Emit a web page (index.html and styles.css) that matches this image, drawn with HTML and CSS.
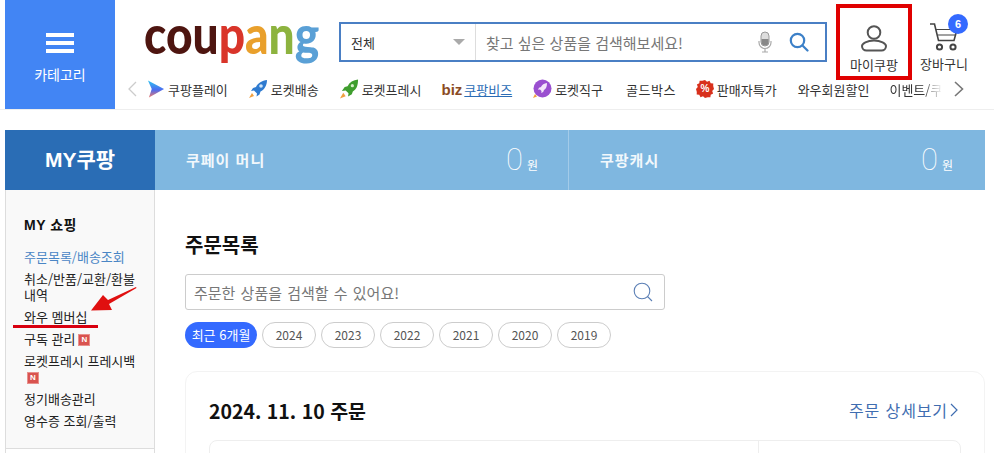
FILE: index.html
```html
<!DOCTYPE html>
<html lang="ko">

<head>
    <meta content="text/html; charset=utf-8" http-equiv="Content-Type">
    <title>쿠팡 - 주문목록</title>
    <link rel="stylesheet" href="styles.css">
</head>

<body>
    <header class="header">
        <a class="categoryBtn">
            <span class="burger"><i></i><i></i><i></i></span>
            <span class="categoryLabel">카테고리</span>
        </a>
        <div class="headerMain">
            <div class="headerTop">
                <div class="logo"><span class="logoText"><span class="c1">cou</span><span class="c2">p</span><span class="c3">a</span><span class="c4">n</span><span class="c5">g</span></span></div>
                <div class="searchBox">
                    <div class="searchCat">전체<span class="caret"></span></div>
                    <div class="searchInput">찾고 싶은 상품을 검색해보세요!</div>
                    <svg class="micIcon" width="14" height="22" viewBox="0 0 14 22">
                        <rect x="3" y="1" width="8" height="14" rx="4" fill="#ddd" stroke="#999"/>
                        <path d="M3.5 8h7v3a3.5 3.5 0 0 1-7 0z" fill="#888"/>
                        <path d="M1 10v1.5a6 6 0 0 0 12 0V10M7 17.5V21M4 21h6" fill="none" stroke="#aaa" stroke-width="1.2"/>
                    </svg>
                    <svg class="glassIcon" width="20" height="20" viewBox="0 0 20 20">
                        <circle cx="8.5" cy="8.5" r="6.7" fill="none" stroke="#3c80c8" stroke-width="2.2"/>
                        <path d="M13.5 13.5l5 5" stroke="#3c80c8" stroke-width="2.2" stroke-linecap="round"/>
                    </svg>
                </div>
                <div class="userLinks">
                    <a class="myLink">
                        <svg width="28" height="28" viewBox="0 0 28 28">
                            <circle cx="14" cy="8.5" r="6.3" fill="none" stroke="#555" stroke-width="2"/>
                            <path d="M6.5 26.5h15a4.5 4.5 0 0 0 4.5-4.5c0-2.500-5-5.500-12-5.500S2 19.500 2 22a4.500 4.500 0 0 0 4.500 4.500z" fill="none" stroke="#555" stroke-width="2"/>
                        </svg>
                        <span>마이쿠팡</span>
                    </a>
                    <a class="cartLink">
                        <svg width="30" height="30" viewBox="0 0 30 30">
                            <path d="M1 2h4.500l4 16.500h15.500l3-11" fill="none" stroke="#444" stroke-width="1.600"/>
                            <path d="M7 7.500h21M8.500 13h18" fill="none" stroke="#444" stroke-width="1.200"/>
                            <circle cx="10.500" cy="25" r="2.600" fill="none" stroke="#444" stroke-width="2"/>
                            <circle cx="24" cy="25" r="2.600" fill="none" stroke="#444" stroke-width="2"/>
                        </svg>
                        <b class="cartBadge">6</b>
                        <span>장바구니</span>
                    </a>
                </div>
            </div>
            <nav class="quickNav">
                <svg class="navArrow" width="9" height="16" viewBox="0 0 9 16"><path d="M8 1L1 8l7 7" fill="none" stroke="#ccc" stroke-width="1.300"/></svg>
                <a class="navItem first">
                    <svg width="18" height="20" viewBox="0 0 19 20"><defs><linearGradient id="play" x1="0" y1="0" x2="0" y2="1"><stop offset="0" stop-color="#2fc4f0"/><stop offset=".55" stop-color="#4c6cf0"/><stop offset="1" stop-color="#f07a6a"/></linearGradient></defs><path d="M1 1l17 9L2 19l3-9z" fill="url(#play)"/></svg>
                    쿠팡플레이
                </a>
                <a class="navItem">
                    <svg width="20" height="20" viewBox="0 0 20 20"><path d="M19 1c-5 .5-9 3-11 7l-3 1-2 3 3-.5 3 3-.5 3 3-2 1-3c4-2 6.500-6 6.500-11.500z" fill="#2f7bd0"/><circle cx="13" cy="7" r="1.800" fill="#cfe6fa"/><path d="M4 14l-3 5 5-2z" fill="#f0a040"/></svg>
                    로켓배송
                </a>
                <a class="navItem">
                    <svg width="20" height="20" viewBox="0 0 21 20"><path d="M20 0c-5 .5-9 3-11 7l-3 1-3 4 4-.5 3 3-.5 3.500 4-2.500 1-3c4-2 5.500-6.500 5.500-12.500z" fill="#3f9e2e"/><circle cx="14" cy="6.500" r="1.700" fill="#d5f0c8"/><path d="M4.500 14L1 20l6-2.500z" fill="#f0a040"/></svg>
                    로켓프레시
                </a>
                <a class="navItem biz"><b>biz</b><u>쿠팡비즈</u></a>
                <a class="navItem">
                    <svg width="20" height="20" viewBox="0 0 20 20"><circle cx="10.500" cy="9.500" r="9" fill="#9a4fd0"/><path d="M15 4c-3 .3-5 2-6 4l-2 .8-1 2 2-.3 1.500 1.500-.3 2 2-1 .8-2c2-1 3-3.500 3-7z" fill="#f3e6fb"/><path d="M3 15l-2 4 4-1.500z" fill="#f0a040"/></svg>
                    로켓직구
                </a>
                <a class="navItem gold">골드박스</a>
                <a class="navItem">
                    <span class="saleBadge">
                        <svg width="18" height="18" viewBox="0 0 18 18"><path d="M9 0l2 1.800 2.500-1 1.200 2.400 2.600.2-.1 2.700L18 9l-1.800 2 .9 2.500-2.400 1.200-.3 2.600-2.700-.1L9 18l-2-1.800-2.500 1-1.200-2.400-2.600-.2.1-2.700L0 9l1.800-2-.9-2.500 2.400-1.200.3-2.600 2.700.1z" fill="#d8301c"/></svg>
                        <span>%</span>
                    </span>
                    판매자특가
                </a>
                <a class="navItem wowItem">와우회원할인</a>
                <a class="navItem fade"><span>이벤트/쿠</span></a>
                <svg class="navArrow next" width="10" height="16" viewBox="0 0 10 16"><path d="M1 1l7.500 7L1 15" fill="none" stroke="#777" stroke-width="1.600"/></svg>
            </nav>
        </div>
    </header>

    <div class="myBar">
        <div class="myTitle">MY쿠팡</div>
        <div class="payCell first">
            <span class="payName">쿠페이 머니</span>
            <span class="payValue"><em>0</em>원</span>
        </div>
        <div class="payCell">
            <span class="payName">쿠팡캐시</span>
            <span class="payValue"><em>0</em>원</span>
        </div>
    </div>

    <div class="content">
        <aside class="sideMenu">
            <h3 class="sideTitle">MY 쇼핑</h3>
            <ul class="sideList">
                <li class="active">주문목록/배송조회</li>
                <li>취소/반품/교환/환불내역</li>
                <li class="wow">와우 멤버십</li>
                <li>구독 관리<span class="newMark">N</span></li>
                <li>로켓프레시 프레시백 <span class="newMark">N</span></li>
                <li>정기배송관리</li>
                <li>영수증 조회/출력</li>
            </ul>
            <svg class="redArrow" width="48" height="26" viewBox="0 0 48 26"><path d="M46 1L18 14l-5-5L1 24.500 22 24l-3-6L46.500 2z" fill="#e01010"/></svg>
            <div class="sideNext"></div>
        </aside>

        <main class="orders">
            <h2 class="ordersTitle">주문목록</h2>
            <div class="orderSearch">
                <span>주문한 상품을 검색할 수 있어요!</span>
                <svg width="20" height="20" viewBox="0 0 20 20"><circle cx="9" cy="9" r="7.800" fill="none" stroke="#5b7fb5" stroke-width="1.100"/><path d="M14.500 14.500l4.500 4.500" stroke="#5b7fb5" stroke-width="1.100"/></svg>
            </div>
            <div class="yearTabs">
                <a class="pill on">최근 6개월</a>
                <a class="pill">2024</a>
                <a class="pill">2023</a>
                <a class="pill">2022</a>
                <a class="pill">2021</a>
                <a class="pill">2020</a>
                <a class="pill">2019</a>
            </div>
            <section class="orderCard">
                <div class="orderHead">
                    <strong>2024. 11. 10 주문</strong>
                    <a class="detailLink">주문 상세보기
                        <svg width="8" height="14" viewBox="0 0 8 14"><path d="M1 1l6 6-6 6" fill="none" stroke="#3f6db0" stroke-width="1.200"/></svg>
                    </a>
                </div>
                <div class="orderBody">
                    <div class="orderItems"></div>
                    <div class="orderActions"></div>
                </div>
            </section>
        </main>
    </div>
</body>

</html>
```

FILE: styles.css
```css
html, body {
    height: 453px;
    overflow: hidden;
}

body {
    margin: 0;
    background: #fff;
    color: #111;
    font-family: "Noto Sans CJK KR", "Liberation Sans", sans-serif;
    font-size: 13px;
}

a {
    color: inherit;
    text-decoration: none;
}

/* header */
.header {
    display: flex;
    height: 109px;
    padding-left: 5px;
    border-bottom: 1px solid #eee;
}

.categoryBtn {
    display: flex;
    flex-direction: column;
    align-items: center;
    width: 110px;
    height: 109px;
    background: #4285f4;
    color: #fff;
}

.burger {
    display: block;
    width: 28px;
    margin-top: 33px;
}

.burger i {
    display: block;
    height: 4px;
    margin-bottom: 4px;
    background: #fff;
}

.categoryLabel {
    margin-top: 8px;
    font-size: 14px;
    line-height: 18px;
}

.headerMain {
    flex: 1;
    min-width: 0;
}

.headerTop {
    display: flex;
    height: 75px;
}

.logo {
    width: 195px;
    margin-left: 29px;
    font-family: "Lato", sans-serif;
    font-size: 53px;
    font-weight: 900;
    line-height: 68px;
}

.logoText {
    display: inline-block;
    transform: scaleX(0.87);
    transform-origin: left center;
    white-space: nowrap;
}

.c1 { color: #4e1510; }
.c2 { color: #d9352a; }
.c3 { color: #e9a02c; }
.c4 { color: #8db33f; }
.c5 { color: #5aa0d6; }

.searchBox {
    display: flex;
    align-items: center;
    width: 488px;
    height: 40px;
    margin-top: 22px;
    border: 2px solid #4a7fc4;
    box-sizing: border-box;
}

.searchCat {
    display: flex;
    align-items: center;
    justify-content: space-between;
    width: 135px;
    height: 100%;
    padding: 0 10px;
    box-sizing: border-box;
    border-right: 1px solid #ddd;
    color: #333;
    font-size: 13px;
}

.caret {
    border-top: 6px solid #aaa;
    border-left: 6px solid transparent;
    border-right: 6px solid transparent;
}

.searchInput {
    flex: 1;
    padding-left: 10px;
    color: #777;
    font-size: 15px;
}

.micIcon {
    margin-right: 17px;
}

.glassIcon {
    margin-right: 16px;
}

.userLinks {
    display: flex;
    margin-left: 9px;
}

.myLink {
    display: flex;
    flex-direction: column;
    align-items: center;
    width: 76px;
    height: 76px;
    margin-top: 4px;
    padding-top: 16px;
    box-sizing: border-box;
    border: 4px solid #e00000;
    color: #333;
    font-size: 13px;
    white-space: nowrap;
}

.myLink span {
    margin-top: 3px;
}

.cartLink {
    position: relative;
    display: flex;
    flex-direction: column;
    align-items: center;
    width: 50px;
    margin-left: 7px;
    padding-top: 22px;
    color: #333;
    font-size: 13px;
}

.cartLink span {
    margin-top: 2px;
    white-space: nowrap;
}

.cartBadge {
    position: absolute;
    top: 14px;
    left: 29px;
    width: 20px;
    height: 20px;
    border-radius: 50%;
    background: #346aff;
    color: #fff;
    font-family: "Liberation Sans", sans-serif;
    font-size: 11px;
    line-height: 20px;
    text-align: center;
}

.quickNav {
    display: flex;
    align-items: center;
    height: 28px;
    padding-left: 13px;
    color: #333;
    white-space: nowrap;
}

.navItem {
    display: flex;
    align-items: center;
    gap: 3px;
    margin-left: 20px;
    font-size: 13px;
}

.navItem.first {
    margin-left: 10px;
}

.navItem.gold {
    margin-left: 23px;
    letter-spacing: 0.5px;
}

.navItem.wowItem {
    margin-left: 21px;
}

.biz {
    gap: 2px;
}

.biz b {
    color: #8a4b24;
    font-family: "Liberation Sans", sans-serif;
    font-size: 15px;
}

.biz u {
    color: #2b6cb5;
}

.saleBadge {
    position: relative;
    display: block;
    width: 18px;
    height: 18px;
    color: #fff;
    font-family: "Liberation Sans", sans-serif;
    font-size: 10px;
    font-weight: 700;
    line-height: 18px;
    text-align: center;
}

.saleBadge svg {
    position: absolute;
    left: 0;
    top: 0;
}

.saleBadge span {
    position: relative;
}

.fade {
    width: 52px;
    overflow: hidden;
}

.fade span {
    -webkit-mask-image: linear-gradient(to right, #000 65%, transparent 100%);
    mask-image: linear-gradient(to right, #000 65%, transparent 100%);
}

.navArrow.next {
    margin-left: 13px;
}

/* my coupang bar */
.myBar {
    display: flex;
    height: 60px;
    margin: 20px 9px 0 5px;
    background: #7fb7e0;
    color: #fff;
}

.myTitle {
    width: 150px;
    background: #2a6db5;
    font-family: "Liberation Sans", "Noto Sans CJK KR", sans-serif;
    font-size: 21px;
    font-weight: 700;
    line-height: 60px;
    text-align: center;
}

.payCell {
    display: flex;
    align-items: center;
    justify-content: space-between;
    flex: 1;
    padding: 0 32px 0 31px;
    border-left: 1px solid #a3cbe9;
}

.payCell.first {
    flex: none;
    width: 352px;
    padding-right: 30px;
    border-left: 0;
}

.payName {
    margin-top: -1px;
    color: #f2f8fc;
    font-size: 15px;
    font-weight: 700;
    letter-spacing: 1px;
}

.payValue {
    display: flex;
    align-items: baseline;
    gap: 4px;
    font-size: 12px;
}

.payValue em {
    font-family: "Roboto", sans-serif;
    font-size: 31px;
    font-style: normal;
    font-weight: 100;
    line-height: 36px;
}

/* content */
.content {
    display: flex;
    height: 263px;
    margin: 0 9px 0 5px;
    overflow: hidden;
}

.sideMenu {
    position: relative;
    width: 150px;
    height: 263px;
    box-sizing: border-box;
    padding: 27px 17px 0 18px;
    background: #f9f9f9;
    border-left: 1px solid #ddd;
    border-right: 1px solid #ddd;
}

.sideTitle {
    margin: 0 0 15px;
    font-family: "Liberation Sans", "Noto Sans CJK KR", sans-serif;
    font-size: 14px;
    font-weight: 700;
    letter-spacing: 0.5px;
    line-height: 17px;
}

.sideList {
    margin: 0;
    padding: 0;
    list-style: none;
    color: #222;
    font-size: 13px;
    line-height: 16px;
}

.sideList li {
    margin-bottom: 6px;
}

.sideList .active {
    color: #4a86c5;
}

.sideList .wow {
    position: relative;
}

/* 빨간 밑줄 */
.sideList .wow::after {
    content: "";
    position: absolute;
    left: -11px;
    top: 16px;
    width: 85px;
    height: 3px;
    background: #d8000f;
}

.newMark {
    display: inline-block;
    width: 12px;
    height: 12px;
    margin-left: 3px;
    box-sizing: border-box;
    border: 1px solid #e8908c;
    background: #d9534f;
    color: #fff;
    font-family: "Liberation Sans", sans-serif;
    font-size: 8px;
    font-weight: 700;
    line-height: 10px;
    text-align: center;
    vertical-align: middle;
}

.redArrow {
    position: absolute;
    left: 84px;
    top: 96px;
}

.sideNext {
    position: absolute;
    left: 0;
    right: 0;
    top: 258px;
    height: 5px;
    background: #fff;
    border-top: 1px solid #ddd;
}

.orders {
    flex: 1;
    padding: 41px 0 0 30px;
}

.ordersTitle {
    margin: 0 0 16px;
    font-size: 20px;
    font-weight: 700;
    line-height: 27px;
}

.orderSearch {
    display: flex;
    align-items: center;
    justify-content: space-between;
    width: 480px;
    height: 36px;
    padding: 0 11px 0 8px;
    box-sizing: border-box;
    border: 1px solid #ccc;
    border-radius: 3px;
    color: #777;
    font-size: 15px;
    word-spacing: 1px;
}

.yearTabs {
    display: flex;
    gap: 5px;
    margin-top: 12px;
}

.pill {
    width: 54px;
    height: 26px;
    box-sizing: border-box;
    border: 1px solid #ccc;
    border-radius: 13px;
    color: #555;
    font-size: 12px;
    line-height: 24px;
    text-align: center;
}

.pill.on {
    width: 72px;
    border: 0;
    background: #346aff;
    color: #fff;
    font-size: 13px;
    line-height: 26px;
}

.orderCard {
    margin-top: 23px;
    padding: 22px 23px 0;
    border: 1px solid #f3f3f3;
    border-radius: 12px;
}

.orderHead {
    display: flex;
    align-items: center;
    justify-content: space-between;
    height: 32px;
}

.orderHead strong {
    font-size: 19.500px;
    font-weight: 700;
}

.detailLink {
    display: flex;
    align-items: center;
    gap: 2px;
    margin-right: 3px;
    color: #3f6db0;
    font-size: 16px;
    letter-spacing: 0.9px;
}

.orderBody {
    display: flex;
    height: 60px;
    margin-top: 14px;
    border: 1px solid #eee;
    border-radius: 8px;
}

.orderItems {
    flex: 1;
}

.orderActions {
    width: 201px;
    border-left: 1px solid #eee;
}
```
